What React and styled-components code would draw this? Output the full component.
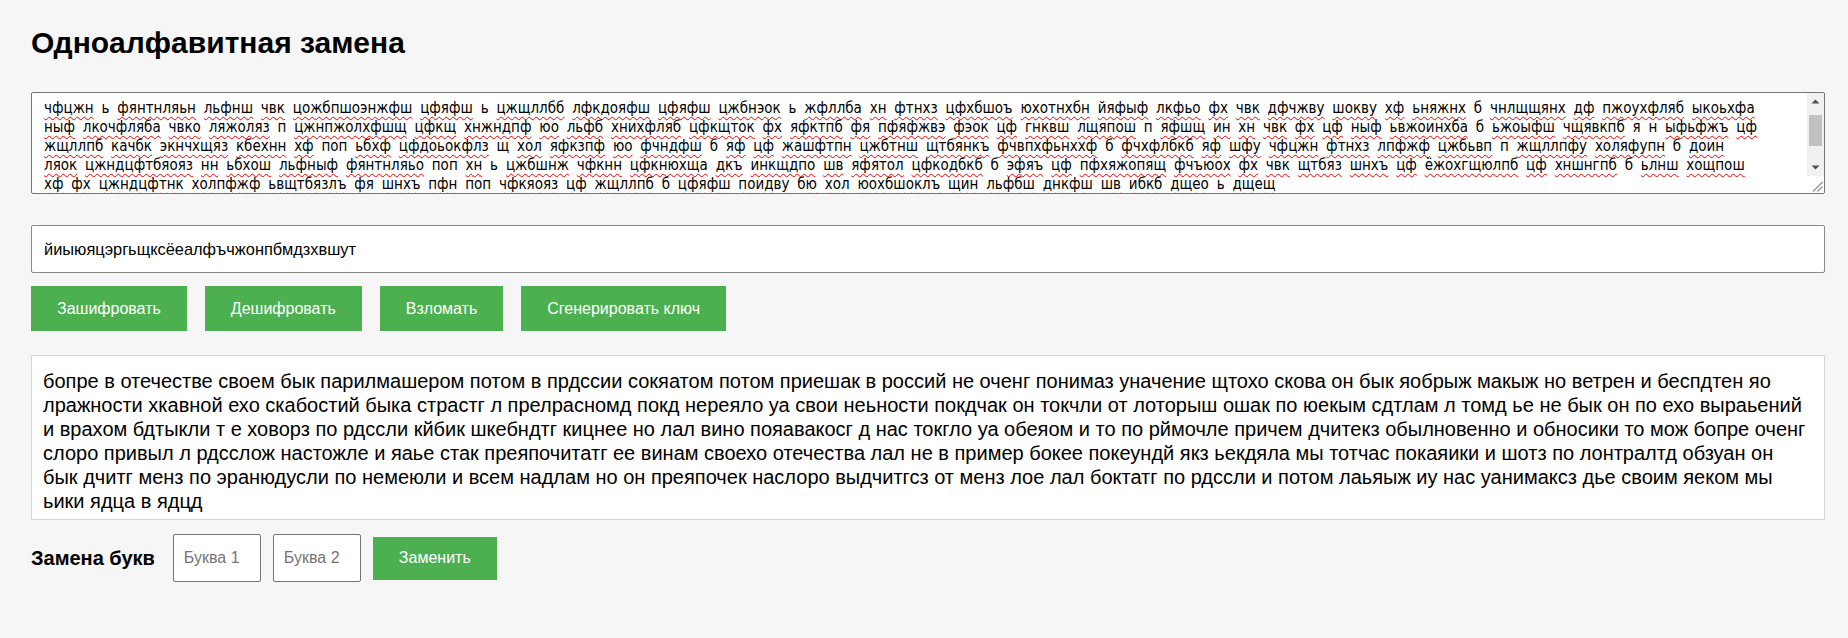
import React from "react";
import styled, { createGlobalStyle } from "styled-components";

const cipherLines = [
  "чфцжн ь фянтнляьн льфнш чвк цожбпшоэнжфш цфяфш ь цжщллбб лфкдояфш цфяфш цжбнэок ь жфллба хн фтнхз цфхбшоъ юхотнхбн йяфыф лкфьо фх чвк дфчжву шокву хф ьняжнх б чнлщщянх дф пжоухфляб ыкоьхфа",
  "ныф лкочфляба чвко ляжоляз п цжнпжолхфшщ цфкщ хнжндпф юо льфб хнихфляб цфкщток фх яфктпб фя пфяфжвэ фэок цф гнквш лщяпош п яфшщ ин хн чвк фх цф ныф ьвжоинхба б ьжоыфш чщявкпб я н ыфьфжъ цф",
  "жщллпб качбк экнчхщяз кбехнн хф поп ьбхф цфдоьокфлз щ хол яфкзпф юо фчндфш б яф цф жашфтпн цжбтнш щтбянкъ фчвпхфьнххф б фчхфлбкб яф шфу чфцжн фтнхз лпфжф цжбьвп п жщллпфу холяфупн б доин",
  "ляок цжндцфтбяояз нн ьбхош льфныф фянтнляьо поп хн ь цжбшнж чфкнн цфкнюхща дкъ инкщдпо шв яфятол цфкодбкб б эфяъ цф пфхяжопящ фчъюох фх чвк щтбяз шнхъ цф ёжохгщюлпб цф хншнгпб б ьлнш хощпош",
  "хф фх цжндцфтнк холпфжф ьвщтбязлъ фя шнхъ пфн поп чфкяояз цф жщллпб б цфяфш поидву бю хол юохбшоклъ щин льфбш днкфш шв ибкб дщео ь дщещ",
];

const plainText =
  "бопре в отечестве своем бык парилмашером потом в прдссии сокяатом потом приешак в россий не оченг понимаз уначение щтохо скова он бык яобрыж макыж но ветрен и беспдтен яо лражности хкавной ехо скабостий быка страстг л прелрасномд покд нереяло уа свои неьности покдчак он токчли от лоторыш ошак по юекым сдтлам л томд ье не бык он по ехо выраьений и врахом бдтыкли т е ховорз по рдссли кйбик шкебндтг кицнее но лал вино пояавакосг д нас токгло уа обеяом и то по рймочле причем дчитекз обылновенно и обносики то мож бопре оченг слоро привыл л рдсслож настожле и яаье стак преяпочитатг ее винам своехо отечества лал не в пример бокее покеундй якз ьекдяла мы тотчас покаяики и шотз по лонтралтд обзуан он бык дчитг менз по эранюдусли по немеюли и всем надлам но он преяпочек наслоро выдчитгсз от менз лое лал боктатг по рдссли и потом лаьяыж иу нас уанимаксз дье своим яеком мы ьики ядца в ядцд";

const knownWords = new Set(["ь", "б", "п", "щ", "я", "н", "поп"]);

const actions = ["Зашифровать", "Дешифровать", "Взломать", "Сгенерировать ключ"];

const Arrow = ({ up }) => (
  <svg width="17" height="17" viewBox="0 0 17 17">
    <path d={up ? "M4.5 10.5h8L8.5 6.5z" : "M4.5 6.5h8L8.5 10.5z"} fill="#505050" />
  </svg>
);

const Grip = () => (
  <svg width="17" height="17" viewBox="0 0 17 17">
    <path d="M6 15.5L15.5 6M10.5 15.5l5-5" stroke="#8f8f8f" strokeWidth="1.2" />
  </svg>
);

const App = () => {
  return (
    <>
      <GlobalStyle />
      <Page>
        <Title>Одноалфавитная замена</Title>

        <CipherBox>
          <CipherText>
            {cipherLines.map((line, i) => (
              <CipherLine key={i}>
                {line.split(" ").map((word, j) => (
                  <React.Fragment key={j}>
                    {j > 0 && " "}
                    <Word $flagged={!knownWords.has(word)}>{word}</Word>
                  </React.Fragment>
                ))}
              </CipherLine>
            ))}
          </CipherText>
          <ScrollRail>
            <RailButton>
              <Arrow up />
            </RailButton>
            <RailTrack>
              <RailThumb />
            </RailTrack>
            <RailButton>
              <Arrow />
            </RailButton>
            <RailCorner>
              <Grip />
            </RailCorner>
          </ScrollRail>
        </CipherBox>

        <KeyInput defaultValue="йиыюяцэргьщксёеалфъчжонпбмдзхвшут" spellCheck={false} />

        <Actions>
          {actions.map(label => (
            <GreenButton key={label}>{label}</GreenButton>
          ))}
        </Actions>

        <Output>{plainText}</Output>

        <ReplaceRow>
          <RowLabel>Замена букв</RowLabel>
          <LetterInput placeholder="Буква 1" />
          <LetterInput placeholder="Буква 2" />
          <GreenButton $compact>Заменить</GreenButton>
        </ReplaceRow>
      </Page>
    </>
  );
};

export default App;

const GlobalStyle = createGlobalStyle`
  html, body {
    margin: 0;
    background: #f6f6f6;
  }
  body {
    font-family: "Liberation Sans", Arial, sans-serif;
    color: #000;
  }
`;

const Page = styled.main`
  padding: 0 23px 40px 31px;
  display: flex;
  flex-direction: column;
`;

const Title = styled.h1`
  font-size: 30px;
  font-weight: bold;
  margin: 25px 0 32px;
  line-height: 35px;
`;

const CipherBox = styled.div`
  box-sizing: border-box;
  height: 102px;
  border: 1px solid #767676;
  border-radius: 2px;
  background: #fff;
  display: flex;
  overflow: hidden;
`;

const CipherText = styled.div`
  flex: 1;
  min-width: 0;
  overflow: hidden;
  padding: 6px 0 0 12px;
  font-family: "DejaVu Sans Condensed", Roboto, sans-serif;
  font-size: 15px;
  line-height: 19px;
  word-spacing: 3.5px;
  color: #000;
`;

const CipherLine = styled.div`
  white-space: nowrap;
`;

const Word = styled.span`
  text-decoration: ${props => (props.$flagged ? "underline wavy #e00" : "none")};
  text-decoration-thickness: 1px;
  text-underline-offset: 3px;
  text-decoration-skip-ink: none;
`;

const ScrollRail = styled.div`
  width: 17px;
  flex-shrink: 0;
  display: flex;
  flex-direction: column;
  background: #f1f1f1;
`;

const RailButton = styled.div`
  height: 17px;
  display: flex;

  svg {
    display: block;
  }
`;

const RailTrack = styled.div`
  flex: 1;
  padding: 5px 2px 0;
`;

const RailThumb = styled.div`
  height: 31px;
  background: #c1c1c1;
`;

const RailCorner = styled.div`
  height: 17px;
  background: #fff;

  svg {
    display: block;
  }
`;

const KeyInput = styled.input`
  margin-top: 31px;
  height: 48px;
  box-sizing: border-box;
  border: 1px solid #8a8a8a;
  border-radius: 2px;
  background: #fff;
  padding: 0 12px;
  font-family: "Liberation Sans", Arial, sans-serif;
  font-size: 16.4px;
  color: #000;
  outline: none;
`;

const Actions = styled.div`
  display: flex;
  gap: 18px;
  margin-top: 13px;
`;

const GreenButton = styled.button`
  height: ${props => (props.$compact ? "43px" : "45px")};
  padding: 0 26px;
  border: none;
  background: #4caf50;
  color: #fff;
  font-family: "Liberation Sans", Arial, sans-serif;
  font-size: 16px;
  cursor: pointer;
`;

const Output = styled.div`
  margin-top: 24px;
  border: 1px solid #d4d4d4;
  background: #fff;
  padding: 13px 11px 6px;
  font-size: 20px;
  line-height: 24px;
  min-height: 140px;
`;

const ReplaceRow = styled.div`
  display: flex;
  align-items: center;
  margin-top: 14px;
`;

const RowLabel = styled.span`
  font-size: 20px;
  font-weight: bold;
  margin-right: 18px;
`;

const LetterInput = styled.input`
  width: 88px;
  height: 48px;
  box-sizing: border-box;
  border: 1px solid #767676;
  border-radius: 2px;
  background: #fff;
  padding: 0 10px;
  margin-right: 12px;
  font-family: "Liberation Sans", Arial, sans-serif;
  font-size: 16px;

  &::placeholder {
    color: #757575;
  }
`;
